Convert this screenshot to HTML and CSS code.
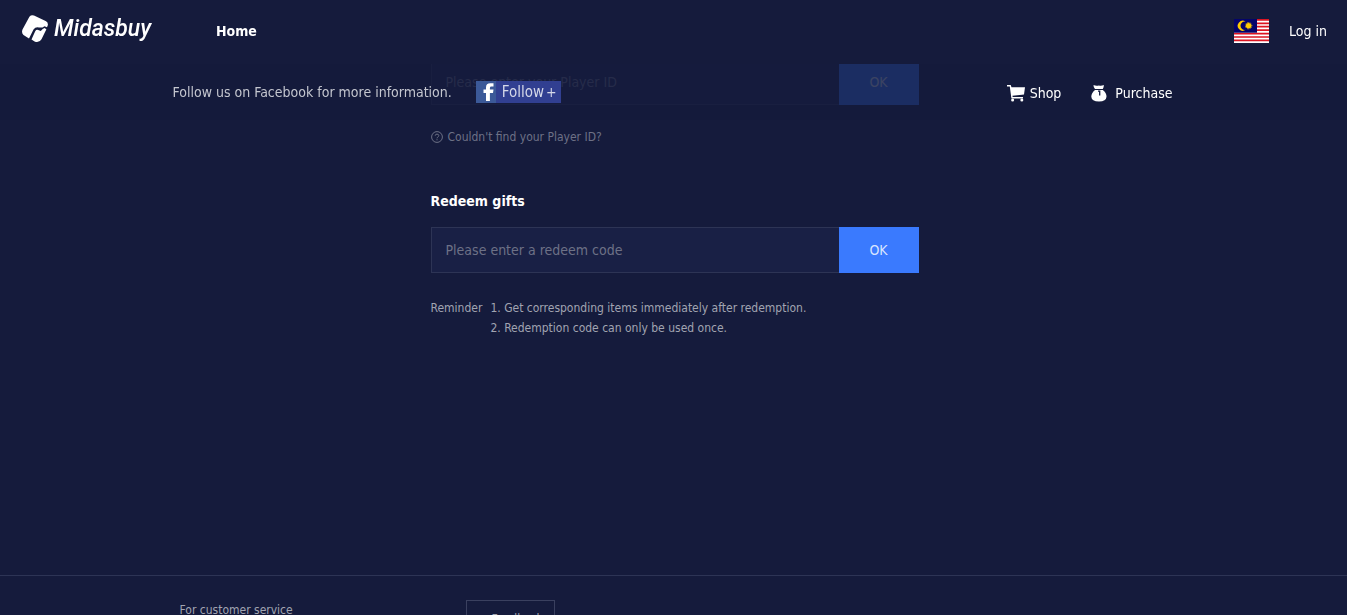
FILE: index.html
```html
<!DOCTYPE html>
<html lang="en">
<head>
<meta charset="utf-8">
<title>Midasbuy - Redeem gifts</title>
<link rel="stylesheet" href="styles.css">
</head>
<body>
<header class="topbar">
  <a class="brand" href="#">
    <svg class="brand-mark" viewBox="0 0 26 28" aria-hidden="true">
      <path fill="#fff" d="M7.400 1.700Q9.400-.5 12 .6L23.600 6Q26.600 7.500 25.700 10.500L25 12.300L22.500 11.300L20.500 12.600L17 12.400Q13.500 11.500 11.500 14.500L7 23.500Q5.500 22.600 1.500 20Q-.8 18 .5 14.500Z"/>
      <path fill="#fff" d="M24.400 14.200L19.500 24.200Q17.400 28 13 26.700L9.500 24.500L13.200 16.200Q14.300 14.200 16.200 15L18.800 16L20.700 14L22.500 13Z"/>
    </svg>
    <span class="brand-name">Midasbuy</span>
  </a>
  <nav class="main-nav"><a href="#">Home</a></nav>
  <div class="account">
    <a href="#" aria-label="Malaysia">
      <svg class="flag" viewBox="0 0 35 24" aria-hidden="true">
        <path fill="#fff" d="M0 0h35v24H0z"/>
        <path stroke="#dc1422" stroke-width="1.710" d="M0 .86h35M0 4.290h35M0 7.710h35M0 11.140h35M0 14.570h35M0 18h35M0 21.430h35"/>
        <path fill="#04046b" d="M0 0h23v13.700H0z"/>
        <path fill="#ffcc00" d="M11.600 2.600A5 5 0 1 0 11.600 10.800A4.200 4.200 0 1 1 11.600 2.600Z"/>
        <circle cx="14.600" cy="6.700" r="2.700" fill="#ffcc00"/>
        <circle cx="14.600" cy="6.700" r="3.200" fill="none" stroke="#ffcc00" stroke-width="1" stroke-dasharray=".7 .75"/>
      </svg>
    </a>
    <a href="#">Log in</a>
  </div>
</header>

<div class="subbar">
  <div class="wrap subbar-inner">
    <p class="follow-text">Follow us on Facebook for more information.</p>
    <a class="follow" href="#">
      <svg class="fb" viewBox="0 0 20 22" aria-hidden="true"><path fill="#3b5998" d="M0 0h20v22H0z"/><path fill="#fff" d="M10 20v-8H7.500V8.500H10V6.500Q10 2.300 14.300 2.300H17.500V5.600H15.400Q13.900 5.600 13.900 7V8.500H17.500L17 12H13.900V20Z"/></svg>
      <span class="follow-label">Follow</span>
      <span class="plus">+</span>
    </a>
    <nav class="shop-nav">
      <a href="#">
        <svg class="cart" viewBox="0 0 18 17" aria-hidden="true"><path fill="#fff" d="M0 0h3.700l.8 2.300H18L17 9.500 5.400 10.700l.3 1.300H16v1.400H4.400L2.800 1.500H0z"/><circle cx="5.600" cy="15" r="1.500" fill="#fff"/><circle cx="14.800" cy="15" r="1.500" fill="#fff"/></svg>
        Shop
      </a>
      <a class="purchase" href="#">
        <svg class="bag" viewBox="0 0 16 17" aria-hidden="true"><path fill="#fff" d="M2.500 0Q5 1.200 8 .4Q10 1.200 12.800 0Q13 2 11.800 4H4Q2.300 2 2.500 0ZM4 5H11.800Q15.700 8 15.500 11.700Q15.200 16.400 8 16.400Q.6 16.400.3 11.700Q.3 8 4 5Z"/><path stroke="#151b3c" stroke-width="1.300" fill="none" d="M8.700 5.500V10.500M7 6.200h2"/></svg>
        Purchase
      </a>
    </nav>
  </div>
</div>

<main class="content">
  <form class="code-form">
    <input type="text" aria-label="Player ID" placeholder="Please enter your Player ID">
    <button type="button">OK</button>
  </form>
  <a class="help" href="#">
    <svg class="help-icon" viewBox="0 0 12 12" fill="none" stroke="currentColor" aria-hidden="true"><circle cx="6" cy="6" r="5.400"/><path d="M4.200 4.700Q4.300 3.100 6 3.100T7.800 4.600Q7.800 5.400 6.900 6Q6 6.500 6 7.300M6 8.200V9.300"/></svg>
    Couldn't find your Player ID?
  </a>
  <h2 class="title">Redeem gifts</h2>
  <form class="code-form">
    <input type="text" aria-label="Redeem code" placeholder="Please enter a redeem code">
    <button type="button">OK</button>
  </form>
  <div class="reminder">
    <span>Reminder</span>
    <div>
      <p>1. Get corresponding items immediately after redemption.</p>
      <p>2. Redemption code can only be used once.</p>
    </div>
  </div>
</main>

<footer class="footer">
  <div class="wrap footer-inner">
    <span class="service">For customer service</span>
    <a class="feedback" href="#">Feedback</a>
  </div>
</footer>
</body>
</html>
```
FILE: styles.css
```css
* { box-sizing: border-box; }

body {
  margin: 0;
  height: 100vh;
  overflow: hidden;
  background: #151b3c;
  color: #fff;
  font: 14px/20px Tahoma, "DejaVu Sans Condensed", "Noto Sans", sans-serif;
}

a { color: inherit; text-decoration: none; }
p, h2 { margin: 0; }
svg { display: block; flex: none; }

.topbar {
  position: fixed;
  inset: 0 0 auto;
  z-index: 2;
  display: flex;
  align-items: center;
  height: 64px;
  padding: 0 20px 2px 22px;
  background: #151b3c;
}

.brand { display: flex; align-items: center; gap: 6px; width: 194px; padding-bottom: 4px; }
.brand-mark { width: 26px; height: 28px; }
.brand-name { font: italic 500 23px/30px Roboto, sans-serif; }
.main-nav { font-weight: bold; }
.account { display: flex; align-items: center; gap: 20px; margin-left: auto; }
.flag { width: 35px; height: 24px; }

.subbar {
  position: fixed;
  inset: 64px 0 auto;
  z-index: 1;
  height: 56px;
  background: rgba(20, 26, 59, 0.8);
}

.wrap { max-width: 1002px; margin: 0 auto; }
.subbar-inner { display: flex; align-items: center; height: 56px; padding-right: 2px; }
.follow-text { color: #c4c6cf; }

.follow {
  display: flex;
  align-items: center;
  height: 22px;
  margin-left: 24px;
  padding-right: 4px;
  background: #313f91;
  color: #d6d9e9;
}
.follow-label { margin: 0 2px 0 6px; font-size: 15px; }
.fb { width: 20px; height: 22px; }
.plus { font-size: 14px; }

.shop-nav { display: flex; gap: 30px; margin-left: auto; padding-top: 2px; }
.shop-nav a { display: flex; align-items: center; gap: 5px; }
.shop-nav .purchase { gap: 8px; }
.cart { width: 18px; height: 17px; }
.bag { width: 16px; height: 17px; }

.content { max-width: 490px; min-height: 575px; margin: 0 auto; padding: 59px 0 0 2px; }

.code-form { display: flex; height: 46px; }
.code-form input {
  flex: 1;
  min-width: 0;
  padding: 0 14px;
  border: 1px solid #2d3455;
  border-right: 0;
  border-radius: 0;
  background: #192045;
  color: #fff;
  font: inherit;
}
.code-form input::placeholder { color: #6d7186; opacity: 1; }
.code-form button {
  width: 80px;
  border: 0;
  background: #3a7afe;
  color: #d8e4ff;
  font: inherit;
}

.help {
  display: flex;
  align-items: center;
  gap: 5px;
  margin-top: 22px;
  color: #6d7186;
  font-size: 12px;
}
.help-icon { width: 12px; height: 12px; }
.title { margin: 44px 0 16px; font-size: 14px; line-height: 20px; }

.reminder {
  display: flex;
  gap: 8px;
  margin-top: 25px;
  color: #a1a4b1;
  font-size: 12px;
}

.footer { border-top: 1px solid #2d3455; }
.footer-inner { display: flex; align-items: flex-start; padding: 24px 7px 0; }
.service { width: 286px; color: #a1a4b1; font-size: 12px; }
.feedback {
  width: 89px;
  height: 38px;
  padding-left: 25px;
  border: 1px solid #3a405f;
  color: #a1a4b1;
  font-size: 12px;
  line-height: 36px;
}
```
